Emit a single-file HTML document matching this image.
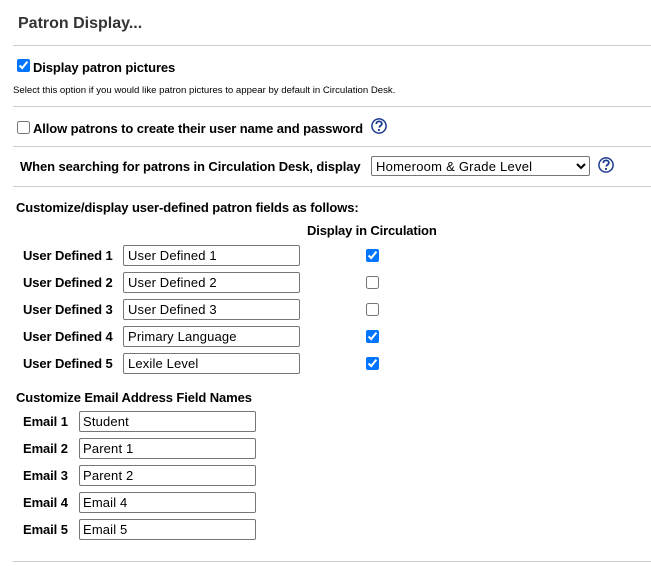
<!DOCTYPE html>
<html lang="en">
<head>
<meta charset="utf-8">
<title>Patron Display</title>
<style>
html,body{margin:0;padding:0;background:#fff;}
body{width:651px;height:566px;position:relative;overflow:hidden;font-family:"Liberation Sans",Arial,sans-serif;color:#000;}
.a{position:absolute;white-space:nowrap;}
.hr{position:absolute;left:13px;width:638px;height:1px;background:#ccc;}
.b{font-weight:bold;font-size:13px;line-height:16px;letter-spacing:-.1px;}
input[type=checkbox]{position:absolute;margin:0;width:13px;height:13px;accent-color:#0075ff;}
input[type=text]{position:absolute;margin:0;box-sizing:border-box;height:21px;border:1px solid #767676;border-radius:2px;padding:1px 4px;font:13px "Liberation Sans",Arial,sans-serif;color:#000;background:#fff;outline:none;letter-spacing:.15px;}
.u{left:123px;width:177px;}
input[type=text].e{left:79px;width:177px;padding-left:3px;}
select{position:absolute;margin:0;box-sizing:border-box;left:371px;top:156px;width:219px;height:20px;font:13px "Liberation Sans",Arial,sans-serif;color:#000;background:#fff;border:1px solid #767676;border-radius:2px;letter-spacing:.24px;}
svg{position:absolute;width:18px;height:18px;}
</style>
</head>
<body>
<div class="a" style="left:18px;top:14px;font-size:16px;line-height:19px;font-weight:bold;color:#333;">Patron Display...</div>
<div class="hr" style="top:45px"></div>

<input type="checkbox" checked style="left:17px;top:59px">
<div class="a b" style="left:33px;top:60px;">Display patron pictures</div>
<div class="a" style="left:13px;top:85px;font-size:9.6px;line-height:12px;">Select this option if you would like patron pictures to appear by default in Circulation Desk.</div>
<div class="hr" style="top:106px"></div>

<input type="checkbox" style="left:17px;top:121px">
<div class="a b" style="left:33px;top:121px;">Allow patrons to create their user name and password</div>
<svg viewBox="0 0 18 18" style="left:370px;top:116.5px"><circle cx="9" cy="9" r="7.1" fill="none" stroke="#1c3a8e" stroke-width="1.5"/><path d="M6.3 7c0-1.6 1.2-2.6 2.8-2.6s2.7 1 2.7 2.3c0 1.1-.6 1.6-1.5 2.2-.7.5-.9.9-.9 1.7" fill="none" stroke="#1c3a8e" stroke-width="1.8"/><rect x="8" y="12" width="1.9" height="1.9" fill="#1c3a8e"/></svg>
<div class="hr" style="top:146px"></div>

<div class="a b" style="left:20px;top:159px;">When searching for patrons in Circulation Desk, display</div>
<select><option>Homeroom &amp; Grade Level</option></select>
<svg viewBox="0 0 18 18" style="left:597px;top:156px"><circle cx="9" cy="9" r="7.1" fill="none" stroke="#1c3a8e" stroke-width="1.5"/><path d="M6.3 7c0-1.6 1.2-2.6 2.8-2.6s2.7 1 2.7 2.3c0 1.1-.6 1.6-1.5 2.2-.7.5-.9.9-.9 1.7" fill="none" stroke="#1c3a8e" stroke-width="1.8"/><rect x="8" y="12" width="1.9" height="1.9" fill="#1c3a8e"/></svg>
<div class="hr" style="top:186px"></div>

<div class="a b" style="left:16px;top:200px;">Customize/display user-defined patron fields as follows:</div>
<div class="a b" style="left:307px;top:223px;letter-spacing:-.15px;">Display in Circulation</div>

<div class="a b" style="left:23px;top:248px;">User Defined 1</div>
<input type="text" class="u" style="top:245px" value="User Defined 1">
<input type="checkbox" checked style="left:366px;top:249px">

<div class="a b" style="left:23px;top:275px;">User Defined 2</div>
<input type="text" class="u" style="top:272px" value="User Defined 2">
<input type="checkbox" style="left:366px;top:276px">

<div class="a b" style="left:23px;top:302px;">User Defined 3</div>
<input type="text" class="u" style="top:299px" value="User Defined 3">
<input type="checkbox" style="left:366px;top:303px">

<div class="a b" style="left:23px;top:329px;">User Defined 4</div>
<input type="text" class="u" style="top:326px" value="Primary Language">
<input type="checkbox" checked style="left:366px;top:330px">

<div class="a b" style="left:23px;top:356px;">User Defined 5</div>
<input type="text" class="u" style="top:353px" value="Lexile Level">
<input type="checkbox" checked style="left:366px;top:357px">

<div class="a b" style="left:16px;top:390px;">Customize Email Address Field Names</div>

<div class="a b" style="left:23px;top:414px;">Email 1</div>
<input type="text" class="e" style="top:411px" value="Student">
<div class="a b" style="left:23px;top:441px;">Email 2</div>
<input type="text" class="e" style="top:438px" value="Parent 1">
<div class="a b" style="left:23px;top:468px;">Email 3</div>
<input type="text" class="e" style="top:465px" value="Parent 2">
<div class="a b" style="left:23px;top:495px;">Email 4</div>
<input type="text" class="e" style="top:492px" value="Email 4">
<div class="a b" style="left:23px;top:522px;">Email 5</div>
<input type="text" class="e" style="top:519px" value="Email 5">

<div class="hr" style="top:561px"></div>
</body>
</html>
